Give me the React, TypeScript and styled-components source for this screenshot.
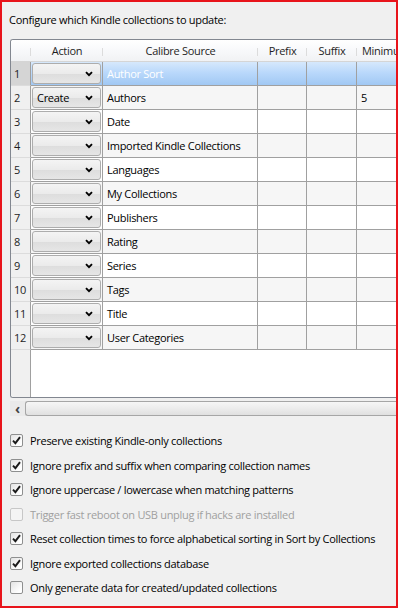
import React from 'react'
import styled, { createGlobalStyle } from 'styled-components'

const GlobalStyle = createGlobalStyle`
  html, body {
    margin: 0;
    padding: 0;
    background: #ffffff;
  }
  body {
    font-family: "Open Sans", "Noto Sans", sans-serif;
    font-size: 11px;
    letter-spacing: -0.3px;
    color: #000000;
  }
`

interface SourceRow {
  name: string
  action: string
  minimum: string
}

const rows: SourceRow[] = [
  { name: 'Author Sort', action: '', minimum: '' },
  { name: 'Authors', action: 'Create', minimum: '5' },
  { name: 'Date', action: '', minimum: '' },
  { name: 'Imported Kindle Collections', action: '', minimum: '' },
  { name: 'Languages', action: '', minimum: '' },
  { name: 'My Collections', action: '', minimum: '' },
  { name: 'Publishers', action: '', minimum: '' },
  { name: 'Rating', action: '', minimum: '' },
  { name: 'Series', action: '', minimum: '' },
  { name: 'Tags', action: '', minimum: '' },
  { name: 'Title', action: '', minimum: '' },
  { name: 'User Categories', action: '', minimum: '' }
]

const options = [
  { label: 'Preserve existing Kindle-only collections', checked: true, disabled: false },
  { label: 'Ignore prefix and suffix when comparing collection names', checked: true, disabled: false },
  { label: 'Ignore uppercase / lowercase when matching patterns', checked: true, disabled: false },
  { label: 'Trigger fast reboot on USB unplug if hacks are installed', checked: false, disabled: true },
  { label: 'Reset collection times to force alphabetical sorting in Sort by Collections', checked: true, disabled: false },
  { label: 'Ignore exported collections database', checked: true, disabled: false },
  { label: 'Only generate data for created/updated collections', checked: false, disabled: false }
]

const COLUMNS = '20px 72px 155px 49px 50px 60px'

const Chevron = () => (
  <svg width='8' height='6' viewBox='0 0 8 6'>
    <path d='M1 1.2 L4 4.2 L7 1.2' fill='none' stroke='#000' strokeWidth='1.9' />
  </svg>
)

const Tick = () => (
  <svg width='9' height='9' viewBox='0 0 9 9'>
    <path d='M1 4.6 L3.4 7.2 L8 1.2' fill='none' stroke='#1a1a1a' strokeWidth='1.9' />
  </svg>
)

const App = () => {
  return (
    <>
      <GlobalStyle />
      <Window>
        <Title>Configure which Kindle collections to update:</Title>
        <TableFrame>
          <HeaderRow>
            <HeaderCell />
            <HeaderCell>Action</HeaderCell>
            <HeaderCell>Calibre Source</HeaderCell>
            <HeaderCell>Prefix</HeaderCell>
            <HeaderCell>Suffix</HeaderCell>
            <HeaderCell align='left'>Minimum</HeaderCell>
          </HeaderRow>
          {rows.map((row, i) => (
            <Row key={row.name} selected={i === 0} alt={i % 2 === 1}>
              <RowNumber selected={i === 0}>{i + 1}</RowNumber>
              <ActionCell>
                <Combo>
                  <ComboText>{row.action}</ComboText>
                  <Chevron />
                </Combo>
              </ActionCell>
              <Cell>{row.name}</Cell>
              <Cell />
              <Cell />
              <Cell>{row.minimum}</Cell>
            </Row>
          ))}
          <Filler>
            <FillerHeader />
            <FillerBody />
          </Filler>
        </TableFrame>
        <ScrollBar>
          <ScrollArrow>‹</ScrollArrow>
          <ScrollThumb />
        </ScrollBar>
        <Options>
          {options.map(o => (
            <Option key={o.label} disabled={o.disabled}>
              <Box disabled={o.disabled}>{o.checked && <Tick />}</Box>
              {o.label}
            </Option>
          ))}
        </Options>
      </Window>
    </>
  )
}

const Window = styled.div`
  width: 398px;
  height: 608px;
  box-sizing: border-box;
  border: 2px solid #e8141b;
  background: #f0f0f0;
  overflow: hidden;
  display: flex;
  flex-direction: column;
`

const Title = styled.div`
  padding: 10px 0 0 7px;
  height: 37px;
  box-sizing: border-box;
  line-height: 15px;
  flex-shrink: 0;
`

const TableFrame = styled.div`
  margin-left: 8px;
  width: 420px;
  height: 359px;
  box-sizing: border-box;
  border: 1px solid #828790;
  border-right: none;
  border-radius: 3px 0 0 3px;
  background: #ffffff;
  display: flex;
  flex-direction: column;
  overflow: hidden;
  flex-shrink: 0;
`

const HeaderRow = styled.div`
  display: grid;
  grid-template-columns: ${COLUMNS};
  height: 21px;
  border-bottom: 1px solid #d5d5d5;
  background: linear-gradient(to bottom, #ffffff 0%, #f7f8fa 55%, #f1f2f4 100%);
  flex-shrink: 0;
`

const HeaderCell = styled.div<{ align?: string }>`
  position: relative;
  display: flex;
  align-items: center;
  justify-content: ${p => (p.align === 'left' ? 'flex-start' : 'center')};
  padding-left: ${p => (p.align === 'left' ? '5px' : '0')};
  color: #1e1e1e;
  white-space: nowrap;
  &::after {
    content: '';
    position: absolute;
    right: 0;
    top: 8px;
    height: 8px;
    border-right: 1px solid #dcdcdc;
  }
`

const Row = styled.div<{ selected: boolean; alt: boolean }>`
  display: grid;
  grid-template-columns: ${COLUMNS};
  height: 24px;
  flex-shrink: 0;
  background: ${p =>
    p.selected
      ? 'linear-gradient(to bottom, #d6e8fc 0%, #b9d8fb 45%, #9fc7f3 100%)'
      : p.alt ? '#f6f6f6' : '#ffffff'};
  color: ${p => (p.selected ? '#ffffff' : '#000000')};
`

const RowNumber = styled.div<{ selected: boolean }>`
  display: flex;
  align-items: center;
  padding-left: 3px;
  background: ${p => (p.selected ? '#d5d5d5' : '#f0f0f0')};
  color: #1e1e1e;
  border-right: 1px solid #a0a0a0;
  border-bottom: 1px solid #dcdcdc;
`

const Cell = styled.div`
  display: flex;
  align-items: center;
  padding-left: 4px;
  border-right: 1px solid #a0a0a0;
  border-bottom: 1px solid #a0a0a0;
  white-space: nowrap;
  overflow: hidden;
`

const ActionCell = styled(Cell)`
  padding: 1px;
  color: #000000;
`

const Combo = styled.div`
  flex: 1;
  height: 21px;
  box-sizing: border-box;
  border: 1px solid #adadad;
  border-radius: 3px;
  background: linear-gradient(to bottom, #f4f4f4 0%, #ebebeb 50%, #dddddd 51%, #e6e6e6 100%);
  display: flex;
  align-items: center;
  justify-content: space-between;
  padding: 0 7px 0 4px;
`

const ComboText = styled.span`
  color: #000000;
`

const Filler = styled.div`
  flex: 1;
  display: grid;
  grid-template-columns: 20px 1fr;
`

const FillerHeader = styled.div`
  background: #f0f0f0;
  border-right: 1px solid #a0a0a0;
`

const FillerBody = styled.div`
  background: #ffffff;
`

const ScrollBar = styled.div`
  margin: 3px 0 0 8px;
  height: 15px;
  display: flex;
  align-items: center;
  background: #eaeaea;
  flex-shrink: 0;
`

const ScrollArrow = styled.div`
  width: 15px;
  text-align: center;
  font-size: 14px;
  line-height: 15px;
  font-weight: bold;
  color: #444;
`

const ScrollThumb = styled.div`
  flex: 1;
  height: 13px;
  border: 1px solid #a6a6a6;
  border-right: none;
  border-radius: 3px 0 0 3px;
  background: linear-gradient(to bottom, #f6f6f6 0%, #ececec 50%, #e0e0e0 100%);
`

const Options = styled.div`
  display: flex;
  flex-direction: column;
  gap: 11.5px;
  padding: 18px 0 0 8px;
`

const Option = styled.div<{ disabled: boolean }>`
  display: flex;
  align-items: center;
  gap: 7px;
  height: 13px;
  color: ${p => (p.disabled ? '#a0a0a0' : '#000000')};
  white-space: nowrap;
`

const Box = styled.div<{ disabled: boolean }>`
  width: 13px;
  height: 13px;
  box-sizing: border-box;
  border: 1px solid ${p => (p.disabled ? '#c7c7c7' : '#8e8f8f')};
  border-radius: 2px;
  background: ${p =>
    p.disabled ? '#f4f4f4' : 'linear-gradient(135deg, #e3e3e3 0%, #ffffff 80%)'};
  display: flex;
  align-items: center;
  justify-content: center;
  flex-shrink: 0;
`

export default App
